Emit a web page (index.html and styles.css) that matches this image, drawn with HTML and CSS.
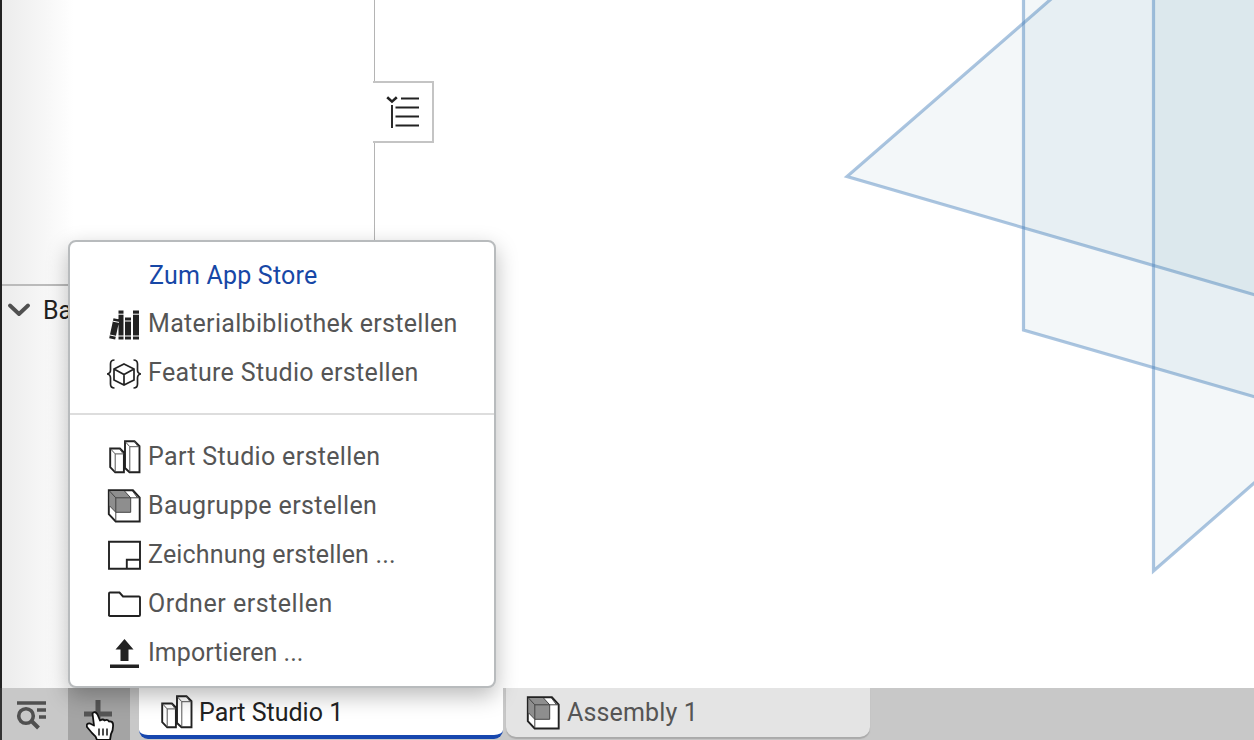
FILE: index.html
```html
<!DOCTYPE html>
<html lang="de">
<head>
<meta charset="utf-8">
<title>Part Studio 1</title>
<link rel="stylesheet" href="styles.css">
</head>
<body>
<svg class="defs" aria-hidden="true">
  <symbol id="part" viewBox="0 0 34 34">
    <path d="M3.200 8.500h9.700l4 4v19.800H8.200l-5-5.200zM18 1.300h9.500l5 4.800v26.200H22.500L18 28z" fill="#fff" stroke="#222" stroke-width="1.900"/>
    <path d="M3.500 8.800l4.700 5.100h8.500M8.200 13.900v18M18.200 1.600l4.600 5.100h9.500M22.800 6.700v25M12.700 8.800l3 4.500M27.500 1.500l3.400 5" fill="none" stroke="#555" stroke-width="1"/>
  </symbol>
  <symbol id="assembly" viewBox="0 0 34 34">
    <path d="M1.800 1.300h24.100l6.800 7.400v23.800H8.700l-6.900-7.300z" fill="#fff" stroke="#222" stroke-width="1.900"/>
    <path d="M2.500 2h15.100l6.100 6.800v14.500H8.900L2.500 16.800z" fill="#8e8e8e"/>
    <path d="M2.500 2l6.300 6.800h23.700M8.800 8.800V32M2.500 16.800l6.300 6.500h14.900V8.800L17.500 2M25.500 2l5 6.800" fill="none" stroke="#444" stroke-width="1"/>
  </symbol>
</svg>
<div class="app">
  <main class="workspace">
    <aside class="sidebar">
      <section class="features"></section>
      <section class="parts">
        <svg class="chevron" viewBox="0 0 24 14"><path d="M3 2.500l9 8.500 9-8.500" fill="none" stroke="#505050" stroke-width="3.800" stroke-linecap="round" stroke-linejoin="round"/></svg>
        <span class="parts-title">Bauteile</span>
      </section>
      <button class="handle" aria-label="Liste">
        <svg width="34" height="36" viewBox="0 0 34 36"><path d="M1.200 3.200l4.800 4.400 4.800-4.400" fill="none" stroke="#222" stroke-width="2.600"/><path d="M15 4.500h18M9.500 13.500h23.500M9.500 22.500h23.500M9.500 31.500h23.500M6 11v23" stroke="#222" stroke-width="1.900"/></svg>
      </button>
    </aside>
    <svg class="viewport" viewBox="375 0 879 688">
      <g class="planes">
        <path d="M1300-217.500L847 176.500 1300 308z"/>
        <path d="M1023.500-20V330L1300 410V-20z"/>
        <path d="M1153.500-20V571L1300 443V-20z"/>
      </g>
    </svg>
  </main>
  <footer class="tabbar">
    <button class="tool search" aria-label="Suchen"><svg width="32" height="30" viewBox="0 0 32 30"><path d="M1 3h29M21 10h9M23 17h7" stroke="#505050" stroke-width="3.400"/><circle cx="10" cy="16" r="7.300" fill="none" stroke="#505050" stroke-width="3.600"/><path d="M15.500 21l7 7" stroke="#505050" stroke-width="4"/></svg></button>
    <button class="tool add" aria-label="Neu"><svg width="28" height="28" viewBox="0 0 28 28"><path d="M14 0v28M0 14h28" stroke="#555" stroke-width="5"/></svg></button>
    <div class="tab active"><svg class="tab-icon"><use href="#part"/></svg><span class="t-part">Part Studio 1</span></div>
    <div class="tab idle"><svg class="tab-icon"><use href="#assembly"/></svg><span class="t-asm">Assembly 1</span></div>
  </footer>
  <nav class="menu">
    <ul class="group upper">
      <li class="store"><span class="ico"></span><span class="m1">Zum App Store</span></li>
      <li><svg class="ico" viewBox="0 0 34 34"><g fill="#222"><path d="M6.500 10.200l6 1.200-4.300 20-6-1.200zM11.500 2.500h5v29h-5zM18 9.500h6v22h-6zM26 2.500h6v29h-6z"/></g><path d="M6 13.200l6 1.200M3 27l6 1.300M11 6.200h6M11 28h6M18 13h6M18 28h6M26 6.200h6M26 28h6" stroke="#fff" stroke-width="1"/></svg><span class="m2">Materialbibliothek erstellen</span></li>
      <li><svg class="ico" viewBox="0 0 34 34"><g fill="none" stroke="#222" stroke-width="1.700"><path d="M7.500 3Q3.500 3 3.500 7v6q0 3.500-3.500 4 3.500.5 3.500 4v6q0 4 4 4M26.500 3q4 0 4 4v6q0 3.500 3.500 4-3.500.5-3.500 4v6q0 4-4 4"/><path d="M17 7l10 5v11l-10 5-10-5V12zM7 12l10 5.500L27 12M17 17.500V28"/></g></svg><span class="m3">Feature Studio erstellen</span></li>
    </ul>
    <ul class="group lower">
      <li><svg class="ico"><use href="#part"/></svg><span class="m4">Part Studio erstellen</span></li>
      <li><svg class="ico"><use href="#assembly"/></svg><span class="m5">Baugruppe erstellen</span></li>
      <li><svg class="ico" viewBox="0 0 34 34"><path d="M2 3.800h31v27H2zM19.800 30.500v-8.700H33" fill="none" stroke="#222" stroke-width="1.900"/></svg><span class="m6">Zeichnung erstellen ...</span></li>
      <li><svg class="ico" viewBox="0 0 34 34"><path d="M2 29V6.500q0-1 1-1h9.500l3.500 4h16q1 0 1 1V28q0 1-1 1H3q-1 0-1-1" fill="none" stroke="#222" stroke-width="1.900"/></svg><span class="m7">Ordner erstellen</span></li>
      <li><svg class="ico" viewBox="0 0 34 34"><path d="M17.500 3L26.500 13.500h-5v11.500h-8V13.500h-5zM3 28.500h29V32H3z" fill="#222"/></svg><span class="m8">Importieren ...</span></li>
    </ul>
  </nav>
  <svg class="cursor" viewBox="0 0 28 30"><path d="M6.500 3.500q2.500-3 5 1l2.500 6q3-2 4.500 0 3-1.500 4.500 1 3.500-.5 4 2.500.5 6-2 10l-1 6H11q-1-4-5-7l-5-6q-1-4 3-3.500l4 2z" fill="#fff" stroke="#111" stroke-width="1.800" stroke-linejoin="round"/><path d="M13 18.500v7M17 18.500v7M21 18.500v7" stroke="#111" stroke-width="1.500"/></svg>
</div>
</body>
</html>
```
FILE: styles.css
```css
* { box-sizing: border-box; }
body { margin: 0; font-family: Roboto, "Liberation Sans", sans-serif; font-size: 25px; color: #555; overflow: hidden; }
button { border: 0; padding: 0; background: none; }
ul { list-style: none; margin: 0; padding: 0; }
.defs { position: absolute; width: 0; height: 0; }
.app { position: relative; width: 1254px; height: 740px; display: grid; grid-template-rows: 688px 52px; overflow: hidden; background: #fff; }
.workspace { display: grid; grid-template-columns: 375px 1fr; }
.sidebar { position: relative; display: flex; flex-direction: column; border-left: 2px solid #222; border-right: 1px solid #b4b4b4; background: linear-gradient(90deg, #ececec, #f6f6f6 40px, #fff 72px); }
.features { height: 286px; border-bottom: 2px solid #bbb; }
.parts { display: flex; align-items: center; gap: 12px; height: 48px; padding-left: 5px; color: #222; }
.chevron { width: 24px; height: 14px; }
.handle { position: absolute; left: 371px; top: 81px; width: 61px; height: 62px; border: 2px solid #c4c4c4; border-left: 0; background: #fff; display: flex; align-items: center; padding-left: 13px; z-index: 1; }
.viewport { width: 879px; height: 688px; }
.planes { fill: rgba(80, 140, 165, .065); stroke: rgba(80, 134, 190, .48); stroke-width: 3.2; }
.tabbar { display: flex; align-items: flex-start; background: #c8c8c8; border-left: 2px solid #333; }
.tool { display: flex; align-items: center; justify-content: center; height: 52px; }
.search { width: 66px; padding: 1px 6px 0 0; }
.add { width: 62px; background: #a4a4a4; padding-right: 2px; }
.tab { display: flex; align-items: center; width: 364px; color: #222; }
.active { height: 51px; margin-left: 9px; padding-left: 20px; background: #fff; border-bottom: 4px solid #1747ae; border-radius: 0 0 9px 9px; }
.idle { height: 49px; margin-left: 3px; padding-left: 20px; background: #e4e4e4; border-radius: 0 0 10px 10px; color: #555; box-shadow: 0 2px 1px #aaa; }
.tab-icon { width: 34px; height: 34px; margin-right: 6px; }
.t-part { padding-top: 1px; }
.t-asm { margin-left: 1px; letter-spacing: .15px; }
.menu { position: absolute; left: 68px; top: 240px; width: 428px; height: 448px; background: #fff; border: 2px solid #b8bbbd; border-radius: 8px; box-shadow: 0 8px 22px rgba(0, 0, 0, .27); }
.menu li { display: flex; align-items: center; height: 49px; padding-left: 37px; white-space: nowrap; }
.ico { width: 34px; height: 34px; margin-right: 7px; flex: none; }
.upper { height: 173px; padding-top: 9px; border-bottom: 2px solid #ddd; }
.upper li + li span { margin-top: -2px; }
.lower { padding-top: 17px; }
.store { color: #1747a6; }
.m1 { margin-left: 1px; letter-spacing: .2px; }
.m2 { letter-spacing: .31px; }
.m3 { letter-spacing: .33px; }
.m4 { letter-spacing: .33px; }
.m5 { letter-spacing: .38px; }
.m6 { letter-spacing: .17px; }
.m7 { letter-spacing: .52px; }
.m8 { letter-spacing: .04px; }
.cursor { position: absolute; left: 86px; top: 710px; width: 28px; height: 30px; }
```
